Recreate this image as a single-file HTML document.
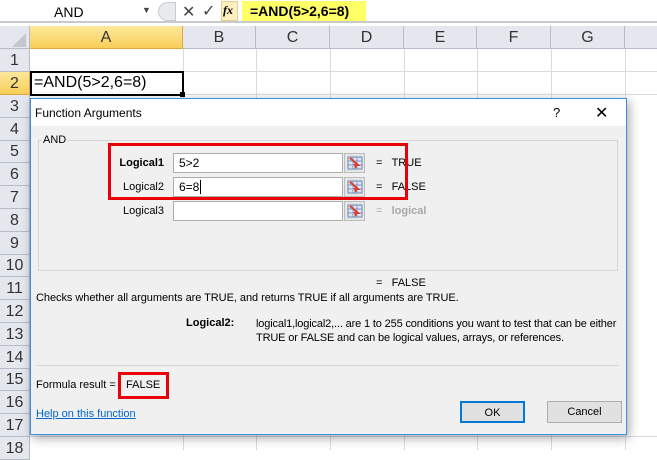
<!DOCTYPE html>
<html><head><meta charset="utf-8">
<style>
*{margin:0;padding:0;box-sizing:border-box}
body{width:657px;height:450px;overflow:hidden;background:#fff;font-family:"Liberation Sans",sans-serif;position:relative}
.a{position:absolute}
.rh{position:absolute;left:0;width:30px;background:#e4e8ee;border-bottom:1px solid #b5bcc7;border-right:1px solid #b5bcc7;font-size:16px;color:#333;text-align:center}
.ch{position:absolute;top:26px;height:23px;background:#e4e8ee;border-right:1px solid #b5bcc7;border-bottom:1px solid #b5bcc7;font-size:16px;color:#333;text-align:center;line-height:23px}
.hl{position:absolute;left:30px;right:0;height:1px;background:#d8dbe0}
.vl{position:absolute;top:49px;bottom:0;width:1px;background:#d8dbe0}
.dlg{position:absolute;left:30px;top:98px;width:597px;height:337px;background:#f0f0f0;border:1px solid #3c8fe0;box-shadow:2px 3px 10px rgba(0,0,0,.35);font-size:11px;color:#000}
.t{position:absolute;white-space:nowrap}
.inp{position:absolute;left:142px;width:170px;height:20px;background:#fff;border:1px solid #adadad;font-size:12px;padding-left:5px;line-height:18px}
.ic{position:absolute;left:313px;width:21px;height:20px;background:#e6e6e6;border:1px solid #bcbcbc}
.lab{position:absolute;right:462px;font-size:11px;text-align:right}
.btn{position:absolute;top:302px;height:22px;background:#e1e1e1;border:1px solid #adadad;text-align:center;line-height:20px;font-size:11px}
</style></head><body>
<div class="a" style="left:0;top:0;width:657px;height:23px;background:#fff;border-bottom:2px solid #c6c9ce"></div>
<div class="t" style="left:54px;top:4px;font-size:14px">AND</div>
<div class="t" style="left:142px;top:5px;font-size:9px;color:#444">▼</div>
<div class="a" style="left:158px;top:2px;width:18px;height:19px;border-radius:10px 0 0 10px;background:#e8eaee;border:1px solid #c8ccd2"></div>
<div class="t" style="left:182px;top:2px;font-size:16px;color:#444">✕</div>
<div class="t" style="left:202px;top:1px;font-size:16px;color:#444">✓</div>
<div class="a" style="left:221px;top:1px;width:17px;height:20px;background:#fcefc0;border:1px solid #e4cf8e"></div>
<div class="t" style="left:223px;top:3px;font-size:12px;font-style:italic;font-family:'Liberation Serif',serif;font-weight:bold">fx</div>
<div class="a" style="left:242px;top:1px;width:124px;height:20px;background:#ffff66"></div>
<div class="t" style="left:250px;top:3px;font-size:14px;font-weight:bold">=AND(5&gt;2,6=8)</div>
<div class="ch" style="left:0;width:30px"></div>
<div class="a" style="left:12px;top:33px;width:0;height:0;border-left:14px solid transparent;border-bottom:14px solid #c3c8cf"></div>
<div class="ch" style="left:30px;width:153px;background:linear-gradient(#fde89a,#f8ce5a);border-color:#e0a93e">A</div>
<div class="ch" style="left:183px;width:73px">B</div>
<div class="ch" style="left:256px;width:74px">C</div>
<div class="ch" style="left:330px;width:74px">D</div>
<div class="ch" style="left:404px;width:73px">E</div>
<div class="ch" style="left:477px;width:74px">F</div>
<div class="ch" style="left:551px;width:74px">G</div>
<div class="ch" style="left:625px;width:40px"></div>
<div class="vl" style="left:183px"></div><div class="vl" style="left:256px"></div><div class="vl" style="left:330px"></div><div class="vl" style="left:404px"></div><div class="vl" style="left:477px"></div><div class="vl" style="left:551px"></div><div class="vl" style="left:625px"></div>
<div class="rh" style="top:49px;height:23px;line-height:23px">1</div><div class="hl" style="top:71px"></div>
<div class="rh" style="top:72px;height:23px;line-height:23px;background:linear-gradient(#fde89a,#f8ce5a);border-color:#e0a93e">2</div><div class="hl" style="top:94px"></div>
<div class="rh" style="top:95px;height:23px;line-height:23px">3</div>
<div class="rh" style="top:118px;height:23px;line-height:23px">4</div>
<div class="rh" style="top:141px;height:22px;line-height:22px">5</div>
<div class="rh" style="top:163px;height:23px;line-height:23px">6</div>
<div class="rh" style="top:186px;height:23px;line-height:23px">7</div>
<div class="rh" style="top:209px;height:23px;line-height:23px">8</div>
<div class="rh" style="top:232px;height:23px;line-height:23px">9</div>
<div class="rh" style="top:255px;height:22px;line-height:22px">10</div>
<div class="rh" style="top:277px;height:23px;line-height:23px">11</div>
<div class="rh" style="top:300px;height:23px;line-height:23px">12</div>
<div class="rh" style="top:323px;height:23px;line-height:23px">13</div>
<div class="rh" style="top:346px;height:23px;line-height:23px">14</div>
<div class="rh" style="top:369px;height:22px;line-height:22px">15</div>
<div class="rh" style="top:391px;height:23px;line-height:23px">16</div>
<div class="rh" style="top:414px;height:23px;line-height:23px">17</div>
<div class="rh" style="top:437px;height:23px;line-height:23px">18</div>
<div class="hl" style="top:436px"></div>
<div class="a" style="left:30px;top:71px;width:154px;height:25px;border:2px solid #000"></div>
<div class="a" style="left:180px;top:92px;width:5px;height:5px;background:#000"></div>
<div class="t" style="left:34px;top:74px;font-size:16px">=AND(5&gt;2,6=8)</div>
<div class="dlg">
<div class="a" style="left:0;top:0;width:595px;height:27px;background:#fff"></div>
<div class="t" style="left:4px;top:7px;font-size:12px">Function Arguments</div>
<div class="t" style="left:522px;top:6px;font-size:13px">?</div>
<div class="t" style="left:564px;top:4px;font-size:16px">✕</div>
<div class="a" style="left:7px;top:41px;width:580px;height:131px;border:1px solid #d5d5d5"></div>
<div class="t" style="left:11px;top:35px;background:#f0f0f0;padding:0 1px">AND</div>
<div class="lab" style="top:58px;font-weight:bold">Logical1</div>
<div class="lab" style="top:82px">Logical2</div>
<div class="lab" style="top:106px">Logical3</div>
<div class="inp" style="top:54px">5&gt;2</div>
<div class="inp" style="top:78px">6=8<span style="border-left:1px solid #000;margin-left:1px"></span></div>
<div class="inp" style="top:102px"></div>
<div class="ic" style="top:54px"><svg width="19" height="18"><rect x="3" y="3" width="14" height="12" fill="#dbe6f4" stroke="#6b87b0"/><path d="M3 7H17M3 11H17M8 3V15M12 3V15" stroke="#6b87b0" stroke-width=".7"/><path d="M5 4L13 11L10 11L11 14" stroke="#e23a2a" stroke-width="2" fill="none"/></svg></div>
<div class="ic" style="top:78px"><svg width="19" height="18"><rect x="3" y="3" width="14" height="12" fill="#dbe6f4" stroke="#6b87b0"/><path d="M3 7H17M3 11H17M8 3V15M12 3V15" stroke="#6b87b0" stroke-width=".7"/><path d="M5 4L13 11L10 11L11 14" stroke="#e23a2a" stroke-width="2" fill="none"/></svg></div>
<div class="ic" style="top:102px"><svg width="19" height="18"><rect x="3" y="3" width="14" height="12" fill="#dbe6f4" stroke="#6b87b0"/><path d="M3 7H17M3 11H17M8 3V15M12 3V15" stroke="#6b87b0" stroke-width=".7"/><path d="M5 4L13 11L10 11L11 14" stroke="#e23a2a" stroke-width="2" fill="none"/></svg></div>
<div class="t" style="left:345px;top:58px">=&nbsp;&nbsp;&nbsp;TRUE</div>
<div class="t" style="left:345px;top:82px">=&nbsp;&nbsp;&nbsp;FALSE</div>
<div class="t" style="left:345px;top:106px;color:#a8a8a8">=&nbsp;&nbsp;&nbsp;<b>logical</b></div>
<div class="a" style="left:77px;top:44px;width:300px;height:57px;border:3px solid #e8000b"></div>
<div class="t" style="left:345px;top:178px">=&nbsp;&nbsp;&nbsp;FALSE</div>
<div class="t" style="left:5px;top:193px;letter-spacing:-0.05px">Checks whether all arguments are TRUE, and returns TRUE if all arguments are TRUE.</div>
<div class="t" style="left:155px;top:218px;font-weight:bold">Logical2:</div>
<div class="t" style="left:225px;top:218px;line-height:14px;letter-spacing:-0.15px">logical1,logical2,... are 1 to 255 conditions you want to test that can be either<br>TRUE or FALSE and can be logical values, arrays, or references.</div>
<div class="a" style="left:5px;top:266px;width:583px;height:1px;background:#d5d5d5"></div>
<div class="t" style="left:5px;top:280px">Formula result =</div>
<div class="a" style="left:87px;top:273px;width:51px;height:27px;border:3px solid #e8000b"></div>
<div class="t" style="left:95px;top:280px">FALSE</div>
<div class="t" style="left:5px;top:309px;color:#0066cc;text-decoration:underline">Help on this function</div>
<div class="btn" style="left:429px;width:65px;border:2px solid #0078d7">OK</div>
<div class="btn" style="left:516px;width:75px">Cancel</div>
</div>
</body></html>
